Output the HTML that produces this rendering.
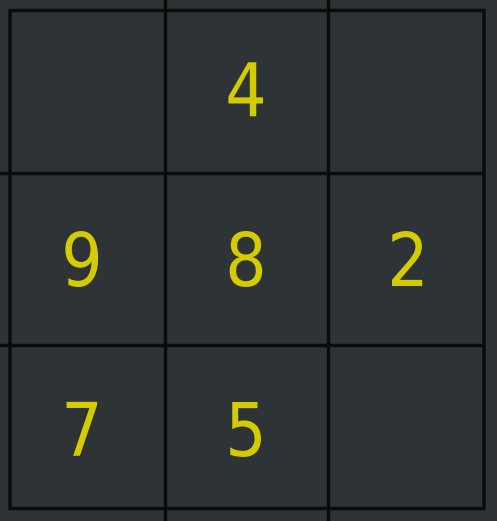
<!DOCTYPE html>
<html><head><meta charset="utf-8"><style>
html,body{margin:0;padding:0;background:#2e3436;width:497px;height:521px;overflow:hidden}
svg{display:block}
text{font-family:"DejaVu Sans","Liberation Sans",sans-serif;font-size:74px;fill:#d4cb00;text-anchor:middle}
</style></head><body>
<svg width="497" height="521" viewBox="0 0 497 521">
<rect width="497" height="521" fill="#2e3436"/>
<g stroke="#0a0b0b" stroke-width="3.5" fill="none">
<rect x="10" y="10.5" width="474" height="498"/>
<line x1="165.5" y1="0" x2="165.5" y2="521"/>
<line x1="328.5" y1="0" x2="328.5" y2="521"/>
<line x1="0" y1="173.5" x2="484" y2="173.5"/>
<line x1="0" y1="345.5" x2="484" y2="345.5"/>
</g>
<text transform="translate(246,116) scale(0.88,1)">4</text>
<text transform="translate(82,286) scale(0.88,1)">9</text>
<text transform="translate(246,286) scale(0.88,1)">8</text>
<text transform="translate(408,286) scale(0.88,1)">2</text>
<text transform="translate(82,456) scale(0.88,1)">7</text>
<text transform="translate(246,456) scale(0.88,1)">5</text>
</svg>
</body></html>
